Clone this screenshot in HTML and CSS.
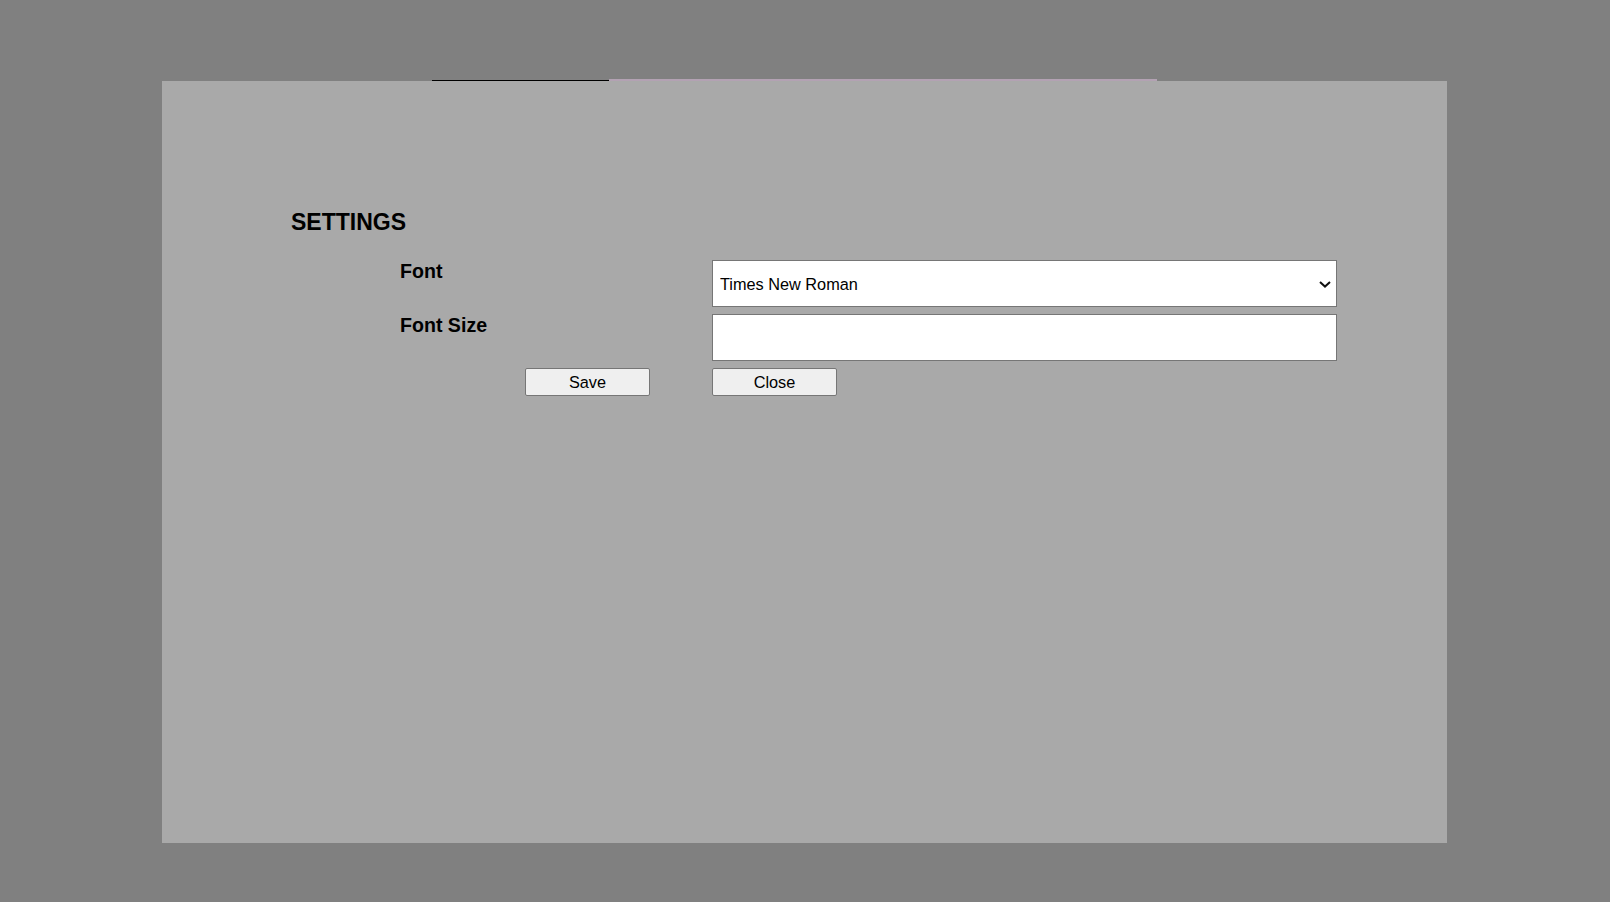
FILE: index.html
```html
<!DOCTYPE html>
<html lang="en">
<head>
<meta charset="utf-8">
<title>Settings</title>
<link rel="stylesheet" href="styles.css">
</head>
<body>
  <div class="tabline">
    <span class="tab-active"></span>
    <span class="tab-rest"></span>
  </div>
  <main class="panel">
    <h2 class="title">SETTINGS</h2>
    <form class="form">
      <label class="label" for="font">Font</label>
      <div class="select-wrap">
        <select class="field select" id="font">
          <option>Times New Roman</option>
          <option>Arial</option>
          <option>Courier New</option>
        </select>
        <svg class="chevron" width="12" height="7" viewBox="0 0 12 7" aria-hidden="true">
          <path d="M1 1 L6 5.6 L11 1" fill="none" stroke="#111" stroke-width="2"/>
        </svg>
      </div>
      <label class="label" for="size">Font Size</label>
      <input class="field input" id="size" type="text">
      <button class="btn btn-save" type="button">Save</button>
      <button class="btn" type="button">Close</button>
    </form>
  </main>
</body>
</html>
```

FILE: styles.css
```css
html, body {
  margin: 0;
  padding: 0;
}

body {
  background: #808080;
  font-family: "Liberation Sans", Arial, sans-serif;
  height: 902px;
  overflow: hidden;
}

.tabline {
  display: flex;
  align-items: flex-end;
  height: 2px;
  margin-top: 79px;
  padding-left: 432px;
}

.tab-active {
  width: 177px;
  height: 1px;
  background: #000;
}

.tab-rest {
  width: 548px;
  height: 2px;
  background: #b3a2b3;
}

.panel {
  box-sizing: border-box;
  margin-left: 162px;
  width: 1285px;
  height: 762px;
  background: #a9a9a9;
  padding: 128px 0 0 129px;
}

.title {
  margin: 0;
  font-size: 23px;
  line-height: 26px;
  font-weight: bold;
  color: #000;
}

.form {
  display: grid;
  grid-template-columns: 250px 625px;
  column-gap: 62px;
  row-gap: 7px;
  margin: 25px 0 0 109px;
}

.label {
  font-size: 19.6px;
  line-height: 22px;
  font-weight: bold;
  color: #000;
}

.select-wrap {
  position: relative;
  height: 47px;
}

.field {
  box-sizing: border-box;
  width: 100%;
  height: 47px;
  margin: 0;
  border: 1px solid #767676;
  border-radius: 0;
  background: #fff;
  font-family: "Liberation Sans", Arial, sans-serif;
  font-size: 16.3px;
  color: #000;
  outline: none;
}

.select {
  appearance: none;
  -webkit-appearance: none;
  padding: 0 30px 0 7px;
}

.input {
  padding: 0 7px;
}

.chevron {
  position: absolute;
  right: 6px;
  top: 21px;
  pointer-events: none;
}

.btn {
  box-sizing: border-box;
  width: 125px;
  height: 28px;
  margin: 0;
  padding: 0;
  border: 1px solid #767676;
  border-radius: 2px;
  background: #efefef;
  font-family: "Liberation Sans", Arial, sans-serif;
  font-size: 16.3px;
  color: #000;
}

.btn-save {
  justify-self: end;
}
```
